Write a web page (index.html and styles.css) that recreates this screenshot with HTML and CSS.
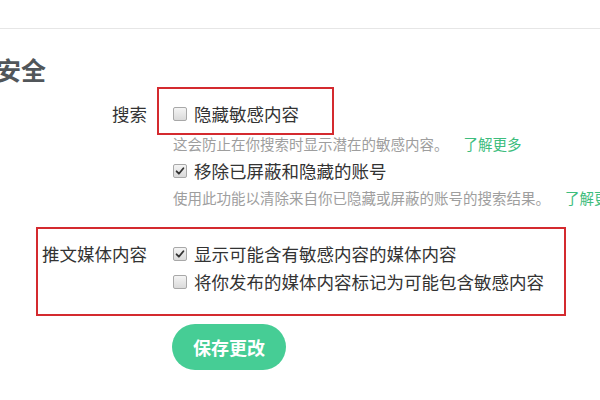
FILE: index.html
```html
<!DOCTYPE html>
<html lang="zh-CN">
<head>
<meta charset="utf-8">
<link rel="stylesheet" href="styles.css">
</head>
<body>
<div class="page">
  <div class="topbar"></div>
  <h1 class="title">安全</h1>

  <div class="setting search">
    <div class="label">搜索</div>
    <div class="options">
      <label class="option"><span class="cb"></span><span>隐藏敏感内容</span></label>
      <p class="desc">这会防止在你搜索时显示潜在的敏感内容。<a class="link">了解更多</a></p>
      <label class="option"><span class="cb checked"><svg viewBox="0 0 12 12"><path d="M2.6 6.3 L4.9 8.7 L9.4 3.2" /></svg></span><span>移除已屏蔽和隐藏的账号</span></label>
      <p class="desc">使用此功能以清除来自你已隐藏或屏蔽的账号的搜索结果。<a class="link">了解更多</a></p>
    </div>
  </div>

  <div class="setting media">
    <div class="label">推文媒体内容</div>
    <div class="options">
      <label class="option"><span class="cb checked"><svg viewBox="0 0 12 12"><path d="M2.6 6.3 L4.9 8.7 L9.4 3.2" /></svg></span><span>显示可能含有敏感内容的媒体内容</span></label>
      <label class="option"><span class="cb"></span><span>将你发布的媒体内容标记为可能包含敏感内容</span></label>
    </div>
  </div>

  <div class="actions">
    <button class="save">保存更改</button>
  </div>

  <div class="mark mark-1"></div>
  <div class="mark mark-2"></div>
</div>
</body>
</html>
```
FILE: styles.css
```css
html, body {
  margin: 0;
  padding: 0;
  background: #ffffff;
  overflow: hidden;
}
body {
  width: 600px;
  height: 400px;
  font-family: "Noto Sans CJK SC", "Noto Sans", sans-serif;
  color: #333333;
}
.page {
  position: relative;
  width: 600px;
  height: 400px;
}
.topbar {
  height: 28px;
  border-bottom: 1px solid #e6e6e6;
}
.title {
  margin: 25px 0 0 -4px;
  font-size: 25px;
  line-height: 30px;
  font-weight: 700;
  color: #51565a;
}
.setting {
  display: grid;
  grid-template-columns: 147px 1fr;
  column-gap: 26px;
  white-space: nowrap;
}
.search {
  margin-top: 16px;
}
.media {
  margin-top: 29px;
}
.label {
  text-align: right;
  font-size: 17.5px;
  line-height: 27px;
  color: #333333;
}
.media .label {
  line-height: 28px;
}
.options {
  display: flex;
  flex-direction: column;
}
.option {
  display: flex;
  align-items: center;
  gap: 7px;
  font-size: 17.5px;
  line-height: 27px;
  color: #333333;
}
.media .option {
  line-height: 28px;
}
.desc {
  margin: 0;
  font-size: 14.5px;
  line-height: 27px;
  color: #9e9e9e;
}
.search .desc:first-of-type {
  margin-top: 3px;
}
.link {
  margin-left: 15px;
  color: #3dbd7d;
}
.cb {
  box-sizing: border-box;
  width: 14px;
  height: 14px;
  border: 1px solid #a8a8a8;
  border-radius: 2px;
  background: linear-gradient(#f4f4f4, #dadada);
  display: flex;
  align-items: center;
  justify-content: center;
  flex: none;
}
.cb svg {
  width: 12px;
  height: 12px;
}
.cb svg path {
  fill: none;
  stroke: #333333;
  stroke-width: 1.8;
  stroke-linecap: round;
  stroke-linejoin: round;
}
.actions {
  margin-top: 28px;
  padding-left: 172px;
}
.save {
  width: 114px;
  height: 46px;
  border: none;
  border-radius: 23px;
  background: #46cd95;
  color: #ffffff;
  font-family: "Noto Sans CJK SC", sans-serif;
  font-size: 18px;
  font-weight: 700;
  padding: 0;
}
.mark {
  position: absolute;
  box-sizing: border-box;
  border: 2px solid #d42a2f;
}
.mark-1 {
  left: 157px;
  top: 87px;
  width: 177px;
  height: 48px;
}
.mark-2 {
  left: 36px;
  top: 227px;
  width: 530px;
  height: 89px;
}
```
